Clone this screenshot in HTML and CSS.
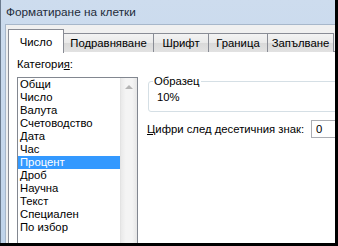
FILE: index.html
```html
<!DOCTYPE html>
<html lang="bg">
<head>
  <meta charset="UTF-8" />
  <title>Форматиране на клетки</title>
  <link rel="stylesheet" href="styles.css">
</head>
<body>

  <div class="window">
    <div class="titlebar">Форматиране на клетки</div>

    <div class="client">
      <!-- Tabs -->
      <div class="tabs">
        <div class="tab active" style="width: 56px">Число</div>
        <div class="tab" style="width: 90px">Подравняване</div>
        <div class="tab" style="width: 55px">Шрифт</div>
        <div class="tab" style="width: 59px">Граница</div>
        <div class="tab" style="width: 66px">Запълване</div>
      </div>

      <div class="pane">
        <!-- Category list -->
        <div class="col-left">
          <div class="label">Категори<u>я</u>:</div>
          <div class="listbox">
            <ul class="items">
              <li>Общи</li>
              <li>Число</li>
              <li>Валута</li>
              <li>Счетоводство</li>
              <li>Дата</li>
              <li>Час</li>
              <li class="selected">Процент</li>
              <li>Дроб</li>
              <li>Научна</li>
              <li>Текст</li>
              <li>Специален</li>
              <li>По избор</li>
            </ul>
            <div class="scrollbar">
              <div class="arrow"></div>
            </div>
          </div>
        </div>

        <!-- Options -->
        <div class="col-right">
          <fieldset class="sample">
            <legend>Образец</legend>
            <div class="sample-value">10%</div>
          </fieldset>
          <div class="decimals">
            <label for="places"><u>Ц</u>ифри след десетичния знак:</label>
            <input type="text" id="places" value="0" />
          </div>
        </div>
      </div>
    </div>
  </div>

</body>
</html>
```

FILE: styles.css
```css
* {
  box-sizing: border-box;
  margin: 0;
  padding: 0;
}

body {
  background: #000;
  width: 338px;
  height: 246px;
  overflow: hidden;
  font-family: 'Liberation Sans', Arial, sans-serif;
  font-size: 11.3px;
  color: #000;
}

.window {
  width: 335px;
  height: 243px;
  overflow: hidden;
  background: linear-gradient(#cddcee, #bfd3ea);
  border-left: 1px solid #6b7b8e;
  display: flex;
  flex-direction: column;
}

.titlebar {
  height: 24px;
  padding: 4px 0 0 5px;
  font-size: 11.8px;
  line-height: 16px;
  color: #1e2b3a;
  flex-shrink: 0;
}

.client {
  flex: 1;
  margin-left: 4px;
  background: #f0f0f0;
  border-top: 1px solid #a7b7ca;
  border-left: 1px solid #a7b7ca;
  display: flex;
  flex-direction: column;
}

.tabs {
  display: flex;
  align-items: flex-end;
  height: 26px;
  padding-left: 2px;
  flex-shrink: 0;
  position: relative;
  z-index: 1;
}

.tab {
  height: 19px;
  margin-bottom: -1px;
  border: 1px solid #898c95;
  border-left: none;
  border-bottom: none;
  background: linear-gradient(#f3f3f3, #e9e9e9 50%, #d9d9d9 51%, #e2e2e2);
  text-align: center;
  line-height: 18px;
  color: #000;
  flex-shrink: 0;
}

.tab.active {
  height: 24px;
  margin-bottom: -2px;
  background: #fff;
  border-left: 1px solid #898c95;
  line-height: 25px;
}

.pane {
  flex: 1;
  margin-left: 2px;
  background: #fff;
  border-top: 1px solid #898c95;
  border-left: 1px solid #898c95;
  display: flex;
  gap: 9px;
  padding: 5px 0 0 8px;
}

.label {
  line-height: 15px;
  margin-bottom: 5px;
}

.listbox {
  width: 121px;
  height: 180px;
  border: 1px solid #828790;
  display: flex;
}

.items {
  list-style: none;
  flex: 1;
}

.items li {
  height: 13px;
  line-height: 13px;
  padding-left: 2px;
}

.items li.selected {
  background: #3399ff;
  color: #fff;
}

.scrollbar {
  width: 17px;
  background: linear-gradient(90deg, #e9e9e9, #f4f4f4 30%, #f4f4f4 70%, #e6e6e6);
  border-left: 1px solid #e3e3e3;
  padding-top: 7px;
}

.arrow {
  width: 0;
  height: 0;
  margin: 0 auto;
  border-left: 4px solid transparent;
  border-right: 4px solid transparent;
  border-bottom: 4px solid #b4b4b4;
}

.col-right {
  display: flex;
  flex-direction: column;
  padding-top: 17px;
}

.sample {
  width: 200px;
  height: 38px;
  border: 1px solid #d5dfe5;
  border-radius: 3px;
  padding: 0 0 0 6px;
  margin-left: 1px;
}

.sample legend {
  padding: 0 1px;
  margin-left: -2px;
  line-height: 14px;
}

.sample-value {
  line-height: 18px;
  padding-left: 2px;
}

.decimals {
  display: flex;
  align-items: center;
  margin-top: 8px;
}

.decimals label {
  white-space: nowrap;
  width: 164px;
  line-height: 15px;
}

.decimals input {
  width: 40px;
  height: 18px;
  border: 1px solid #abadb3;
  font: inherit;
  padding-left: 4px;
}
```
